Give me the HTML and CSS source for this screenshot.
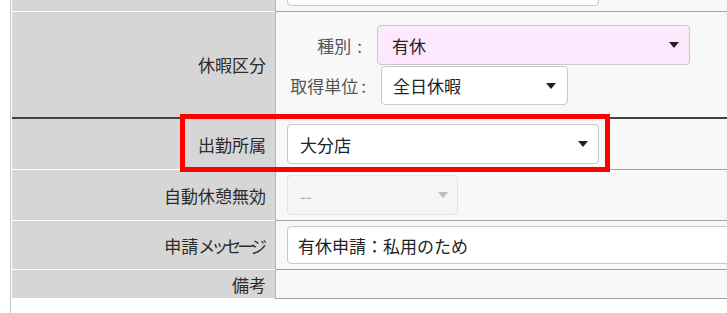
FILE: index.html
```html
<!DOCTYPE html>
<html lang="ja">
<head>
<meta charset="utf-8">
<title>申請フォーム</title>
<link rel="stylesheet" href="styles.css">
</head>
<body>
<div class="form">
  <div class="row row-0">
    <div class="label"></div>
    <div class="value value-bottom">
      <div class="select select-wide"><span class="select-text"></span><span class="caret"></span></div>
    </div>
  </div>
  <div class="row row-1 row-thick">
    <div class="label">休暇区分</div>
    <div class="value value-stack">
      <div class="sub-line">
        <span class="sub-label sub-label-1">種別<span class="colon colon-1">:</span></span>
        <div class="select select-pink"><span class="select-text">有休</span><span class="caret"></span></div>
      </div>
      <div class="sub-line">
        <span class="sub-label sub-label-2">取得単位<span class="colon colon-2">:</span></span>
        <div class="select select-unit"><span class="select-text">全日休暇</span><span class="caret"></span></div>
      </div>
    </div>
  </div>
  <div class="row row-2">
    <div class="label">出勤所属</div>
    <div class="value">
      <div class="select select-wide"><span class="select-text">大分店</span><span class="caret"></span></div>
    </div>
  </div>
  <div class="row row-3">
    <div class="label">自動休憩無効</div>
    <div class="value">
      <div class="select select-disabled"><span class="select-text">--</span><span class="caret"></span></div>
    </div>
  </div>
  <div class="row row-4">
    <div class="label">申請<span class="kana">メッセージ</span></div>
    <div class="value">
      <div class="text-input">有休申請：私用のため</div>
    </div>
  </div>
  <div class="row row-5">
    <div class="label">備考</div>
    <div class="value"></div>
  </div>
  <div class="highlight"></div>
</div>
</body>
</html>
```
FILE: styles.css
```css
html, body {
  margin: 0;
  padding: 0;
  background: #ffffff;
  overflow: hidden;
}
body {
  width: 727px;
  height: 313px;
  font-family: "Noto Sans CJK JP", "Noto Sans", sans-serif;
  font-size: 17px;
  color: #222;
}
.form {
  position: relative;
  margin-left: 10px;
  border-left: 1px solid #c6c6c6;
  padding-left: 1px;
  height: 313px;
  box-sizing: border-box;
}
.row {
  display: flex;
}
.row-0 { height: 12px; }
.row-1 { height: 107px; }
.row-2 { height: 51px; }
.row-3 { height: 51px; }
.row-4 { height: 49px; }
.row-5 { height: 29px; }

.label {
  width: 263px;
  flex: none;
  box-sizing: border-box;
  background: #d5d6d5;
  border-bottom: 1px solid #ffffff;
  display: flex;
  align-items: center;
  justify-content: flex-end;
  padding-right: 9px;
  color: #2b2b2b;
  line-height: 1;
  white-space: nowrap;
}
.kana {
  letter-spacing: -4px;
  margin-right: 3px;
}
.value {
  flex: 1;
  min-width: 0;
  box-sizing: border-box;
  background: #f8f8f8;
  border-left: 1px solid #b4b4b4;
  border-bottom: 1px solid #a2a2a2;
  padding-left: 11px;
  display: flex;
  align-items: center;
  overflow: hidden;
}
.row-thick .label,
.row-thick .value {
  border-bottom: 2px solid #444444;
}
.value-bottom {
  align-items: flex-end;
  padding-bottom: 5px;
}
.value-stack {
  flex-direction: column;
  align-items: flex-start;
  justify-content: flex-start;
  padding-top: 13px;
  gap: 1px;
}
.sub-line {
  display: flex;
  align-items: center;
}
.sub-label {
  color: #555;
  text-align: right;
  white-space: nowrap;
  line-height: 1;
}
.colon-1 { margin-left: 6px; }
.colon-2 { margin-left: 3px; }
.sub-label-1 {
  width: 75px;
  margin-right: 15px;
}
.sub-label-2 {
  width: 79px;
  margin-right: 15px;
}

.select {
  flex: none;
  box-sizing: border-box;
  height: 40px;
  background: #ffffff;
  border: 1px solid #c8c8c8;
  border-radius: 4px;
  display: flex;
  align-items: center;
  justify-content: space-between;
  padding-left: 12px;
  padding-right: 10px;
  color: #222;
  line-height: 1;
}
.select-wide { width: 312px; }
.select-pink {
  width: 313px;
  background: #fde8fd;
  padding-left: 14px;
}
.select-unit {
  width: 187px;
  height: 39px;
  padding-left: 11px;
  padding-right: 11px;
}
.select-disabled {
  width: 171px;
  background: #f5f5f5;
  border-color: #e4e4e4;
  color: #aaa;
  padding-right: 9px;
}
.caret {
  width: 0;
  height: 0;
  border-left: 5px solid transparent;
  border-right: 5px solid transparent;
  border-top: 6px solid #222;
}
.select-disabled .caret {
  border-top-color: #bdbdbd;
}
.text-input {
  flex: none;
  box-sizing: border-box;
  width: 520px;
  height: 38px;
  background: #ffffff;
  border: 1px solid #c8c8c8;
  border-radius: 4px;
  display: flex;
  align-items: center;
  padding-left: 10px;
  color: #222;
  line-height: 1;
  white-space: nowrap;
}
.highlight {
  position: absolute;
  left: 169px;
  top: 114px;
  width: 430px;
  height: 58px;
  box-sizing: border-box;
  border: 5px solid #ff0000;
  pointer-events: none;
}
```
